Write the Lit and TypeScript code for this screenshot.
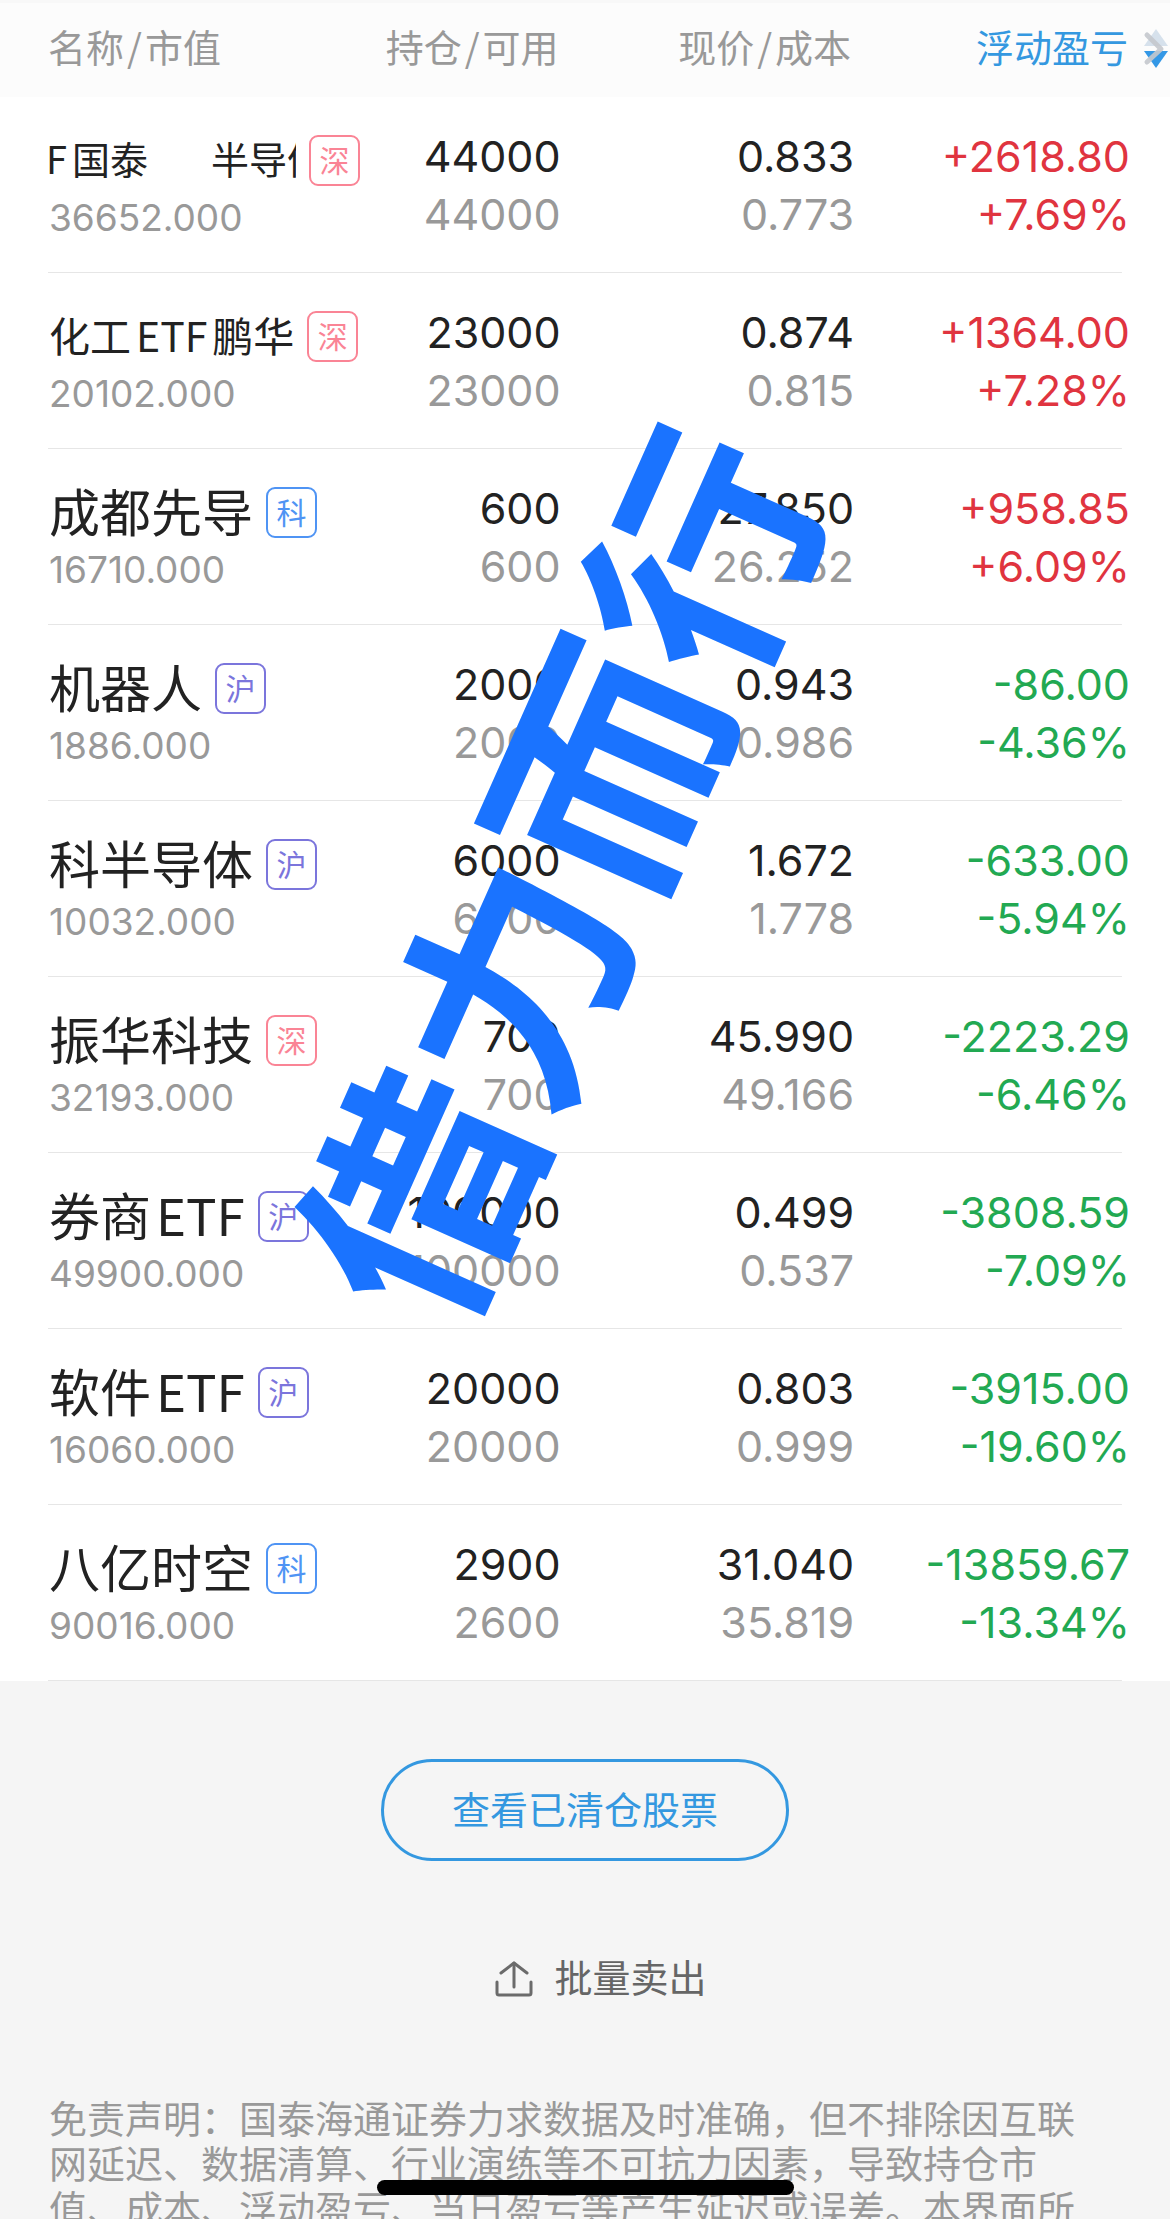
import { LitElement, html, css, svg } from "lit";
import { customElement } from "lit/decorators.js";
import { classMap } from "lit/directives/class-map.js";

type Market = "sz" | "sh" | "kc";

interface Holding {
  name: string[];
  size?: "scroll" | "compact";
  market: Market;
  value: string;
  held: string;
  usable: string;
  price: string;
  cost: string;
  profit: string;
  rate: string;
}

const MARKET_LABEL: Record<Market, string> = { sz: "深", sh: "沪", kc: "科" };

const HOLDINGS: Holding[] = [
  { name: ["F", "国泰", "半导体"], size: "scroll", market: "sz", value: "36652.000", held: "44000", usable: "44000", price: "0.833", cost: "0.773", profit: "+2618.80", rate: "+7.69%" },
  { name: ["化工", "ETF", "鹏华"], size: "compact", market: "sz", value: "20102.000", held: "23000", usable: "23000", price: "0.874", cost: "0.815", profit: "+1364.00", rate: "+7.28%" },
  { name: ["成都先导"], market: "kc", value: "16710.000", held: "600", usable: "600", price: "27.850", cost: "26.252", profit: "+958.85", rate: "+6.09%" },
  { name: ["机器人"], market: "sh", value: "1886.000", held: "2000", usable: "2000", price: "0.943", cost: "0.986", profit: "-86.00", rate: "-4.36%" },
  { name: ["科半导体"], market: "sh", value: "10032.000", held: "6000", usable: "6000", price: "1.672", cost: "1.778", profit: "-633.00", rate: "-5.94%" },
  { name: ["振华科技"], market: "sz", value: "32193.000", held: "700", usable: "700", price: "45.990", cost: "49.166", profit: "-2223.29", rate: "-6.46%" },
  { name: ["券商", "ETF"], market: "sh", value: "49900.000", held: "100000", usable: "100000", price: "0.499", cost: "0.537", profit: "-3808.59", rate: "-7.09%" },
  { name: ["软件", "ETF"], market: "sh", value: "16060.000", held: "20000", usable: "20000", price: "0.803", cost: "0.999", profit: "-3915.00", rate: "-19.60%" },
  { name: ["八亿时空"], market: "kc", value: "90016.000", held: "2900", usable: "2600", price: "31.040", cost: "35.819", profit: "-13859.67", rate: "-13.34%" },
];

const sortIcon = svg`
  <path d="M13 1 25 18H1Z" fill="#d6e1ec" />
  <path d="M1 23H25L13 40Z" fill="#3498e6" />
  <path d="M4 7 18 21 4 34" fill="none" stroke="#c4c8cd" stroke-opacity=".9" stroke-width="5" stroke-linecap="round" stroke-linejoin="round" />
`;

const uploadIcon = svg`
  <g fill="none" stroke="#6b6b6b" stroke-width="3" stroke-linecap="round" stroke-linejoin="round">
    <path d="M2 22V33Q2 35 4 35H34Q36 35 36 33V22" />
    <path d="M19 27V3" />
    <path d="M6 13 19 3 32 13" />
  </g>
`;

@customElement("app-root")
export class AppRoot extends LitElement {
  static styles = css`
    :host {
      --cjk: "Noto Sans CJK SC", sans-serif;
      --num: Inter, "Noto Sans CJK SC", sans-serif;
      --ink: #222;
      --muted: #999;
      --blue: #3498e0;
      display: block;
      position: relative;
      height: 100vh;
      overflow: hidden;
      background: #f5f5f5;
      color: var(--ink);
      font-family: var(--cjk);
    }
    .page {
      height: 100%;
      overflow-y: auto;
      scrollbar-width: none;
    }
    button {
      font: inherit;
      color: inherit;
      background: none;
      border: 0;
      padding: 0;
      margin: 0;
      cursor: pointer;
    }
    .label {
      display: block;
      padding-bottom: 5px;
    }
    .holdings {
      position: relative;
      background: #fff;
    }
    .grid {
      width: 100%;
      table-layout: fixed;
      border-collapse: collapse;
    }
    .c-name { width: 31%; }
    .c-held { width: 17%; }
    .c-price { width: 25%; }
    th, td {
      padding: 0;
      text-align: right;
      vertical-align: top;
    }
    .head {
      background: #fcfcfc;
      color: var(--muted);
      box-shadow: inset 0 3px 0 #f8f8f8;
    }
    .head th {
      height: 97px;
      padding-right: 3px;
      font-size: 38px;
      line-height: 56px;
      font-weight: 400;
      vertical-align: middle;
      white-space: nowrap;
    }
    .head .first { padding: 0 0 0 48px; text-align: left; }
    .head .last { padding: 0; }
    .slash { margin: 0 3px; }
    .sort {
      display: flex;
      width: 100%;
      justify-content: flex-end;
      align-items: center;
      gap: 15px;
      padding-right: 1px;
      color: var(--blue);
    }
    .sort svg { width: 26px; height: 41px; }
    .row {
      background: linear-gradient(#e6e6e6, #e6e6e6) 48px 100% / calc(100% - 96px) 1px no-repeat;
    }
    .row td {
      height: 146px;
      padding: 30px 1px 0 0;
      font-family: var(--num);
      font-size: 43px;
      line-height: 58px;
    }
    .row .price { padding-right: 0; }
    .row .stock {
      height: 139px;
      padding: 37px 0 0 49px;
      text-align: left;
      font-family: var(--cjk);
    }
    .row .gain { padding-right: 40px; }
    .title {
      display: flex;
      align-items: center;
      gap: 13px;
      height: 52px;
    }
    .name {
      display: flex;
      gap: 5px;
      max-width: 247px;
      padding-bottom: 5px;
      overflow: hidden;
      white-space: nowrap;
      font-size: 51px;
      line-height: 72px;
    }
    .name span { flex: none; }
    .compact { font-size: 41px; }
    .scroll { font-size: 38px; }
    .scroll span:first-child { margin-left: -3px; }
    .scroll span:last-child { margin-left: 58px; }
    .tag {
      box-sizing: border-box;
      flex: none;
      width: 51px;
      height: 51px;
      border: 2px solid;
      border-radius: 9px;
      font-size: 30px;
      line-height: 44px;
      text-align: center;
    }
    .sz { color: #fa8495; }
    .sh { color: #7b75dc; }
    .kc { color: #4f94f4; }
    .value {
      margin-top: 10px;
      font-family: var(--num);
      font-size: 37px;
      line-height: 44px;
      color: var(--muted);
    }
    .sub { color: var(--muted); }
    .up { color: #e0343f; }
    .down { color: #22a952; }
    .mark {
      position: absolute;
      left: 47%;
      top: 52%;
      margin-top: -5px;
      transform: translate(-50%, -50%) rotate(-66deg);
      font-size: 234px;
      line-height: 1;
      font-weight: 700;
      white-space: nowrap;
      color: #1a73ff;
      pointer-events: none;
    }
    .foot {
      display: flex;
      flex-direction: column;
      align-items: center;
      padding-top: 78px;
      font-size: 38px;
    }
    .cleared {
      box-sizing: border-box;
      min-width: 408px;
      height: 102px;
      border: 3px solid var(--blue);
      border-radius: 51px;
      color: var(--blue);
    }
    .batch {
      display: flex;
      align-items: center;
      gap: 21px;
      margin-top: 87px;
      padding-left: 32px;
      line-height: 56px;
      color: #666;
    }
    .batch svg { width: 38px; height: 37px; }
    .notice {
      align-self: stretch;
      margin: 85px 80px 0 49px;
      line-height: 45px;
      color: var(--muted);
    }
    .home {
      position: absolute;
      left: 50%;
      bottom: 24px;
      width: 417px;
      height: 15px;
      margin-left: -208px;
      border-radius: 8px;
      background: #000;
    }
  `;

  private renderPair(a: string, b: string) {
    return html`<span class="label">${a}<span class="slash">/</span>${b}</span>`;
  }

  private renderRow(h: Holding) {
    const tone = h.profit.startsWith("+") ? "up" : "down";
    const nameClass = { name: true, compact: h.size === "compact", scroll: h.size === "scroll" };
    return html`
      <tr class="row">
        <td class="stock">
          <div class="title">
            <div class=${classMap(nameClass)}>${h.name.map((part) => html`<span>${part}</span>`)}</div>
            <div class="tag ${h.market}">${MARKET_LABEL[h.market]}</div>
          </div>
          <div class="value">${h.value}</div>
        </td>
        <td><div>${h.held}</div><div class="sub">${h.usable}</div></td>
        <td class="price"><div>${h.price}</div><div class="sub">${h.cost}</div></td>
        <td class="gain ${tone}"><div>${h.profit}</div><div>${h.rate}</div></td>
      </tr>
    `;
  }

  render() {
    return html`
      <main class="page" lang="zh-CN">
        <section class="holdings">
          <table class="grid">
            <colgroup>
              <col class="c-name" /><col class="c-held" /><col class="c-price" /><col />
            </colgroup>
            <thead>
              <tr class="head">
                <th class="first" scope="col">${this.renderPair("名称", "市值")}</th>
                <th scope="col">${this.renderPair("持仓", "可用")}</th>
                <th scope="col">${this.renderPair("现价", "成本")}</th>
                <th class="last" scope="col" aria-sort="descending">
                  <button class="sort" type="button">
                    <span class="label">浮动盈亏</span>
                    <svg viewBox="0 0 26 41" aria-hidden="true">${sortIcon}</svg>
                  </button>
                </th>
              </tr>
            </thead>
            <tbody>
              ${HOLDINGS.map((h) => this.renderRow(h))}
            </tbody>
          </table>
          <div class="mark">借力而行</div>
        </section>
        <footer class="foot">
          <button class="cleared" type="button"><span class="label">查看已清仓股票</span></button>
          <button class="batch" type="button">
            <svg viewBox="0 0 38 37" aria-hidden="true">${uploadIcon}</svg>
            <span class="label">批量卖出</span>
          </button>
          <p class="notice">免责声明：国泰海通证券力求数据及时准确，但不排除因互联网延迟、数据清算、行业演练等不可抗力因素，导致持仓市值、成本、浮动盈亏、当日盈亏等产生延迟或误差。本界面所</p>
        </footer>
      </main>
      <div class="home"></div>
    `;
  }
}
